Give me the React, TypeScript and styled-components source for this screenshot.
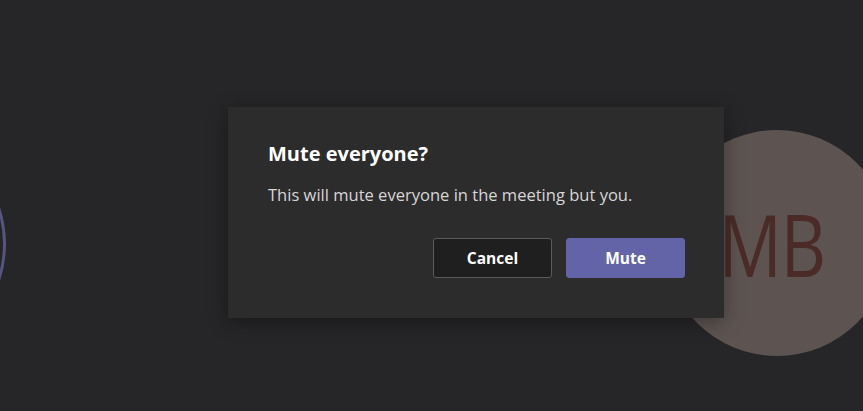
import { createGlobalStyle, styled } from "styled-components";

const GlobalStyle = createGlobalStyle`
  html, body {
    margin: 0;
    padding: 0;
    background: #262528;
  }
  * {
    box-sizing: border-box;
  }
`;

const App = () => {
  return (
    <>
      <GlobalStyle />
      <Stage>
        <LeftAvatar />
        <RightAvatar>
          <Initials>MB</Initials>
        </RightAvatar>
        <Dialog>
          <Title>Mute everyone?</Title>
          <Message>This will mute everyone in the meeting but you.</Message>
          <Actions>
            <Button>Cancel</Button>
            <Button primary>Mute</Button>
          </Actions>
        </Dialog>
      </Stage>
    </>
  );
};

const Stage = styled.div`
  position: relative;
  width: 863px;
  height: 411px;
  overflow: hidden;
  background: #262528;
  display: flex;
  align-items: flex-start;
  padding: 107px 0 0 228px;
  font-family: "Open Sans", "Liberation Sans", sans-serif;
`;

const LeftAvatar = styled.div`
  position: absolute;
  left: -226px;
  top: 128px;
  width: 232px;
  height: 232px;
  border-radius: 50%;
  border: 3px solid #55557f;
`;

const RightAvatar = styled.div`
  position: absolute;
  left: 664px;
  top: 130px;
  width: 226px;
  height: 226px;
  border-radius: 50%;
  background: #5d5451;
  display: flex;
  align-items: center;
  justify-content: center;
`;

const Initials = styled.span`
  display: inline-block;
  margin-left: -12px;
  font-family: "Open Sans", "Liberation Sans", sans-serif;
  font-size: 86px;
  font-weight: 500;
  color: #4a2b27;
  letter-spacing: -2px;
  transform: scaleX(0.82);
`;

const Dialog = styled.div`
  position: relative;
  width: 496px;
  height: 211px;
  background: #2d2c2d;
  box-shadow: 0 4px 18px rgba(0, 0, 0, 0.35);
  padding: 34px 39px 40px 40px;
  display: flex;
  flex-direction: column;
`;

const Title = styled.h2`
  margin: 0;
  font-size: 20px;
  font-weight: 700;
  line-height: 26px;
  color: #ffffff;
`;

const Message = styled.p`
  margin: 17px 0 0;
  font-size: 16.55px;
  line-height: 22px;
  color: #d6d6d6;
`;

const Actions = styled.div`
  margin-top: auto;
  display: flex;
  justify-content: flex-end;
  gap: 14px;
`;

const Button = styled.button<{ primary?: boolean }>`
  width: 119px;
  height: 40px;
  border-radius: 3px;
  border: 1px solid ${(p) => (p.primary ? "#6264a7" : "#5a5a5a")};
  background: ${(p) => (p.primary ? "#6264a7" : "#1f1f1f")};
  color: #ffffff;
  font-family: "Open Sans", "Liberation Sans", sans-serif;
  font-size: 15.5px;
  font-weight: 700;
  cursor: pointer;
`;

export default App;
